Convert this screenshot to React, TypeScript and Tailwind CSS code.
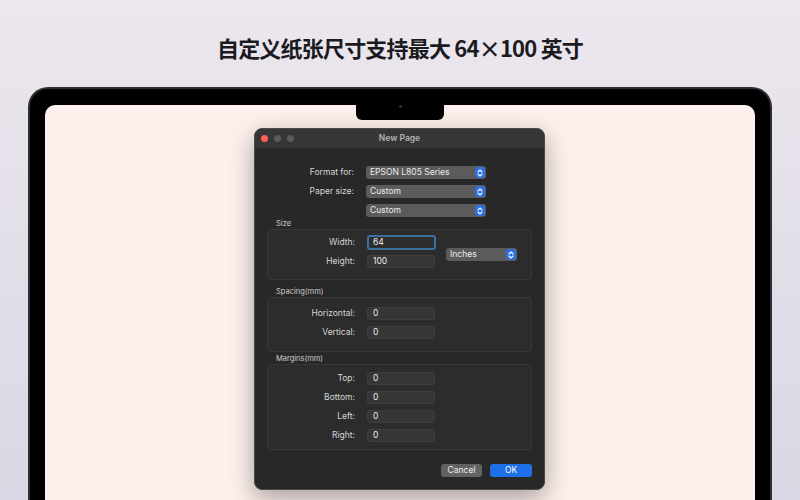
import type { ReactNode } from "react";

const ui = { fontFamily: "Inter, 'Liberation Sans', sans-serif" };

// Small up/down chevrons used on every popup button
function Stepper() {
  return (
    <span className="flex h-[11px] w-[10px] items-center justify-center rounded-[3px] bg-[#2f6fe4]">
      <svg width="6" height="8" viewBox="0 0 6 8" fill="none" stroke="#ffffff" strokeWidth="1.1" strokeLinecap="round" strokeLinejoin="round">
        <polyline points="1,3 3,1 5,3" />
        <polyline points="1,5 3,7 5,5" />
      </svg>
    </span>
  );
}

function Popup({ value, width }: { value: string; width: string }) {
  return (
    <div className={`flex h-[13px] items-center justify-between rounded-[3px] bg-[#5b5b5b] pl-[4px] pr-[1px] text-[8.5px] text-[#ececec] ${width}`}>
      <span>{value}</span>
      <Stepper />
    </div>
  );
}

function Field({ value, focused }: { value: string; focused?: boolean }) {
  if (focused) {
    return (
      <div className="-my-[1px] flex h-[15px] w-[69px] items-center rounded-[3px] border-[2px] border-[#3c6f9e] bg-[#2e2e2e] pl-[4px] text-[8.5px] text-[#ececec]">
        {value}
      </div>
    );
  }
  return (
    <div className="flex h-[13px] w-[68px] items-center rounded-[3px] border border-[#3e3e3e] bg-[#363636] pl-[5px] text-[8.5px] text-[#ececec]">
      {value}
    </div>
  );
}

function Row({ label, children }: { label: string; children: ReactNode }) {
  return (
    <div className="flex items-center gap-[12px]">
      <span className="w-[87px] text-right text-[8.5px] text-[#d6d6d6]">{label}</span>
      {children}
    </div>
  );
}

function Section({ title, className, children }: { title: string; className: string; children: ReactNode }) {
  return (
    <div className={className}>
      <div className="h-[10px] pl-[9px] text-[7.5px] leading-[10px] text-[#cfcfcf]">{title}</div>
      {children}
    </div>
  );
}

function NewPageDialog() {
  return (
    <div
      style={ui}
      className="ml-[209px] mt-[22px] w-[291px] overflow-hidden rounded-[8px] border border-[#4a4a4a] bg-[#282828] shadow-[0_8px_24px_rgba(0,0,0,0.35)]"
    >
      <div className="relative flex h-[19px] items-center justify-center bg-[#363636]">
        <div className="absolute left-[6px] top-[6px] flex gap-[6px]">
          <span className="h-[7px] w-[7px] rounded-full bg-[#ff5f57]" />
          <span className="h-[7px] w-[7px] rounded-full bg-[#5a5a5a]" />
          <span className="h-[7px] w-[7px] rounded-full bg-[#5a5a5a]" />
        </div>
        <span className="text-[8.5px] font-semibold text-[#b4b4b4]">New Page</span>
      </div>

      <div className="px-[12px] pb-[12px] pt-[18px]">
        <div className="flex flex-col gap-[6px]">
          <Row label="Format for:">
            <Popup value="EPSON L805 Series" width="w-[120px]" />
          </Row>
          <Row label="Paper size:">
            <Popup value="Custom" width="w-[120px]" />
          </Row>
          <Row label="">
            <Popup value="Custom" width="w-[120px]" />
          </Row>
        </div>

        <Section title="Size" className="mt-[2px]">
          <div className="flex items-center rounded-[4px] border border-[#383838] bg-[#2c2c2c] pb-[11px] pt-[6px]">
            <div className="flex flex-col gap-[6px]">
              <Row label="Width:">
                <Field value="64" focused />
              </Row>
              <Row label="Height:">
                <Field value="100" />
              </Row>
            </div>
            <div className="ml-[10px] mt-[5px]">
              <Popup value="Inches" width="w-[71px]" />
            </div>
          </div>
        </Section>

        <Section title="Spacing(mm)" className="mt-[7px]">
          <div className="flex flex-col gap-[6px] rounded-[4px] border border-[#383838] bg-[#2c2c2c] pb-[12px] pt-[9px]">
            <Row label="Horizontal:">
              <Field value="0" />
            </Row>
            <Row label="Vertical:">
              <Field value="0" />
            </Row>
          </div>
        </Section>

        <Section title="Margins(mm)" className="mt-[2px]">
          <div className="flex flex-col gap-[6px] rounded-[4px] border border-[#383838] bg-[#2c2c2c] pb-[7px] pt-[7px]">
            <Row label="Top:">
              <Field value="0" />
            </Row>
            <Row label="Bottom:">
              <Field value="0" />
            </Row>
            <Row label="Left:">
              <Field value="0" />
            </Row>
            <Row label="Right:">
              <Field value="0" />
            </Row>
          </div>
        </Section>

        <div className="mt-[14px] flex justify-end gap-[8px]">
          <button className="flex h-[13px] w-[41px] items-center justify-center rounded-[3px] bg-[#636363] text-[8.5px] text-[#ececec]">
            Cancel
          </button>
          <button className="flex h-[13px] w-[42px] items-center justify-center rounded-[3px] bg-[#1f6fe8] text-[8.5px] text-white">
            OK
          </button>
        </div>
      </div>
    </div>
  );
}

export default function App() {
  return (
    <div className="flex h-[500px] w-[800px] flex-col overflow-hidden bg-gradient-to-b from-[#ece7ee] to-[#dad7e4]">
      <h1
        className="pt-[32px] text-center text-[22px] font-bold leading-[30px] tracking-[-0.8px] text-[#1b1b1f]"
        style={{ fontFamily: "'Noto Sans CJK SC', 'Noto Sans', sans-serif" }}
      >
        自定义纸张尺寸支持最大 64×100 英寸
      </h1>

      <div className="mx-[28px] mt-[25px] flex-1 rounded-t-[20px] border-[2px] border-b-0 border-[#2e2e33] bg-black px-[15px] pt-[16px]">
        <div className="relative h-[420px] rounded-t-[10px] bg-[#fdf0ec] pt-px">
          <div className="absolute left-1/2 top-0 flex h-[15px] w-[88px] -translate-x-1/2 justify-center rounded-b-[6px] bg-black">
            <span className="h-[3px] w-[3px] rounded-full bg-[#2a3040]" />
          </div>
          <NewPageDialog />
        </div>
      </div>
    </div>
  );
}
